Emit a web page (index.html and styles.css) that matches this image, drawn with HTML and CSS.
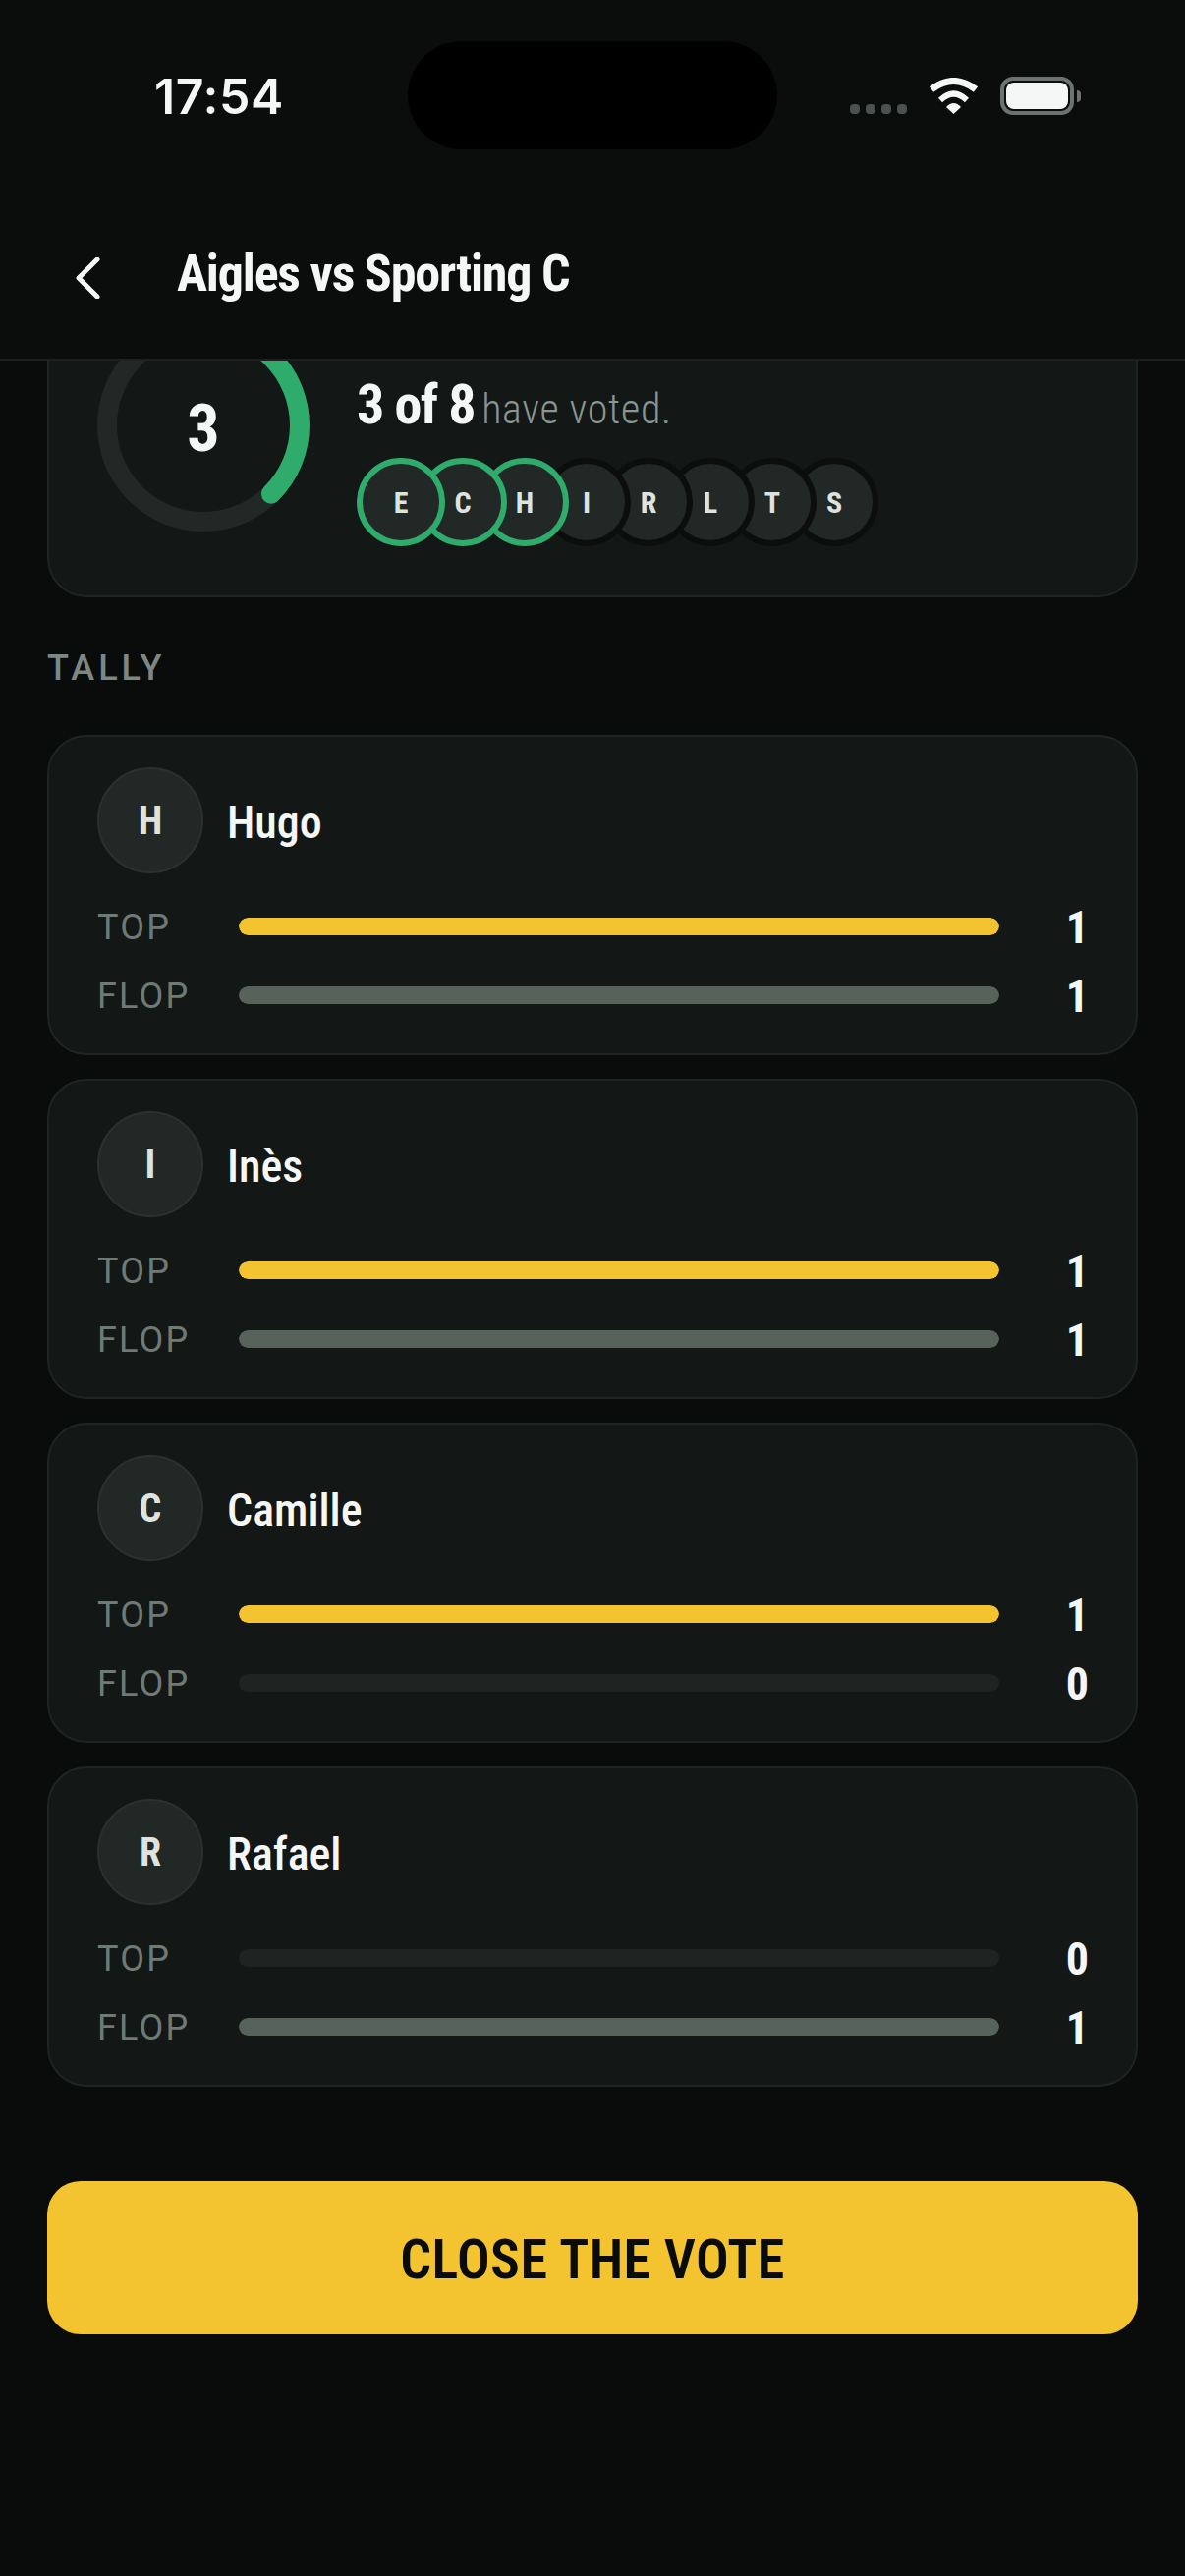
FILE: index.html
```html
<!DOCTYPE html>
<html lang="en">
<head>
    <meta charset="UTF-8">
    <meta name="viewport" content="width=device-width, initial-scale=1.0">
    <title>Aigles vs Sporting C</title>
    <link rel="stylesheet" href="styles.css">
</head>
<body>
    <div class="screen">
        <!-- Status bar and title -->
        <header class="header">
            <div class="status-bar">
                <span class="time">17:54</span>
                <div class="island"></div>
                <div class="status-icons">
                    <div class="signal"><i></i><i></i><i></i><i></i></div>
                    <svg class="wifi" width="51" height="37" viewBox="0 0 51 37">
                        <path d="M3 12Q25.500 -5 48 12" fill="none" stroke="#f5f7f6" stroke-width="7"/>
                        <path d="M12 23Q25.500 10 39 23" fill="none" stroke="#f5f7f6" stroke-width="6"/>
                        <path d="M18 30Q25.500 22 33 30L25.500 37Z" fill="#f5f7f6"/>
                    </svg>
                    <div class="battery"><div class="battery-level"></div></div>
                    <div class="battery-nub"></div>
                </div>
            </div>
            <div class="nav">
                <svg class="back" width="26" height="42" viewBox="0 0 26 42">
                    <path d="M23 2L4 21L23 40" fill="none" stroke="#f5f7f6" stroke-width="5" stroke-linecap="round" stroke-linejoin="round"/>
                </svg>
                <h1>Aigles vs Sporting C</h1>
            </div>
        </header>

        <main class="content">
            <div class="scroller">
                <!-- Vote progress -->
                <section class="card summary">
                    <div class="ring">
                        <svg width="216" height="216" viewBox="0 0 216 216">
                            <circle cx="108" cy="108" r="98" fill="none" stroke="#222825" stroke-width="20"/>
                            <circle class="ring-value" cx="108" cy="108" r="98" fill="none" stroke="#2fab6b" stroke-width="20" stroke-linecap="round" stroke-dasharray="231 616"/>
                        </svg>
                        <span class="ring-count">3</span>
                    </div>
                    <div class="summary-info">
                        <p class="voted"><strong>3 of 8</strong> <span class="voted-rest">have voted.</span></p>
                        <div class="voters">
                            <span class="voter done">E</span>
                            <span class="voter done">C</span>
                            <span class="voter done">H</span>
                            <span class="voter">I</span>
                            <span class="voter">R</span>
                            <span class="voter">L</span>
                            <span class="voter">T</span>
                            <span class="voter">S</span>
                        </div>
                    </div>
                </section>

                <h2 class="section-title">TALLY</h2>

                <div class="tally">
                    <section class="card player">
                        <div class="player-head"><span class="avatar">H</span><span class="name">Hugo</span></div>
                        <div class="row"><span class="row-label">TOP</span><div class="track"><div class="fill top" style="width:100%"></div></div><span class="count">1</span></div>
                        <div class="row"><span class="row-label">FLOP</span><div class="track"><div class="fill flop" style="width:100%"></div></div><span class="count">1</span></div>
                    </section>
                    <section class="card player">
                        <div class="player-head"><span class="avatar">I</span><span class="name">Inès</span></div>
                        <div class="row"><span class="row-label">TOP</span><div class="track"><div class="fill top" style="width:100%"></div></div><span class="count">1</span></div>
                        <div class="row"><span class="row-label">FLOP</span><div class="track"><div class="fill flop" style="width:100%"></div></div><span class="count">1</span></div>
                    </section>
                    <section class="card player">
                        <div class="player-head"><span class="avatar">C</span><span class="name">Camille</span></div>
                        <div class="row"><span class="row-label">TOP</span><div class="track"><div class="fill top" style="width:100%"></div></div><span class="count">1</span></div>
                        <div class="row"><span class="row-label">FLOP</span><div class="track"><div class="fill flop" style="width:0%"></div></div><span class="count">0</span></div>
                    </section>
                    <section class="card player">
                        <div class="player-head"><span class="avatar">R</span><span class="name">Rafael</span></div>
                        <div class="row"><span class="row-label">TOP</span><div class="track"><div class="fill top" style="width:0%"></div></div><span class="count">0</span></div>
                        <div class="row"><span class="row-label">FLOP</span><div class="track"><div class="fill flop" style="width:100%"></div></div><span class="count">1</span></div>
                    </section>
                </div>

                <button class="close-vote">CLOSE THE VOTE</button>
            </div>
        </main>
    </div>
</body>
</html>
```

FILE: styles.css
```css
/* General Styles */
* {
    box-sizing: border-box;
}

body {
    margin: 0;
    background: #0a0c0b;
    color: #f5f7f6;
    font-family: Roboto, sans-serif;
    font-stretch: 75%;
}

.screen {
    display: flex;
    flex-direction: column;
    height: 2622px;
    overflow: hidden;
}

/* Header */
.header {
    flex: none;
    position: relative;
    z-index: 2;
    height: 367px;
    background: #0a0d0c;
    border-bottom: 2px solid #1c2120;
}

.status-bar {
    display: flex;
    align-items: flex-start;
    height: 222px;
    padding: 42px 0 0 157px;
}

.time {
    width: 258px;
    margin-top: 29px;
    font-family: Inter, sans-serif;
    font-stretch: normal;
    font-size: 50px;
    font-weight: 600;
    line-height: 54px;
    letter-spacing: 0.6px;
}

.island {
    width: 376px;
    height: 110px;
    background: #000;
    border-radius: 55px;
}

.status-icons {
    display: flex;
    align-items: center;
    height: 39px;
    margin: 36px 0 0 74px;
}

.signal {
    display: flex;
    gap: 6px;
    align-self: flex-end;
    margin: 0 22px 1px 0;
}

.signal i {
    width: 10px;
    height: 10px;
    background: #4a524c;
    border-radius: 4px;
}

.wifi {
    margin-right: 22px;
}

.battery {
    width: 75px;
    height: 39px;
    padding: 2px;
    border: 4px solid #6a736f;
    border-radius: 13px;
}

.battery-level {
    height: 100%;
    background: #f5f7f6;
    border-radius: 8px;
}

.battery-nub {
    width: 4px;
    height: 12px;
    margin-left: 3px;
    background: #6a736f;
    border-radius: 0 4px 4px 0;
}

.nav {
    display: flex;
    align-items: center;
    padding-left: 76px;
}

.back {
    margin: 30px 78px 0 0;
}

.nav h1 {
    margin: 22px 0 0;
    font-size: 52px;
    font-weight: 700;
    line-height: 70px;
    letter-spacing: -1.2px;
}

/* Scrolled content */
.content {
    flex: 1;
    overflow: hidden;
}

.scroller {
    margin-top: -94px;
    padding: 0 48px;
}

.card {
    background: #131716;
    border: 2px solid #1f2523;
    border-radius: 40px;
}

/* Vote progress */
.summary {
    display: flex;
    align-items: flex-end;
    gap: 48px;
    padding: 50px 50px 50px 49px;
}

.ring {
    display: grid;
    place-items: center;
    width: 216px;
    height: 216px;
    margin-bottom: 15px;
}

.ring svg,
.ring-count {
    grid-area: 1 / 1;
}

.ring-value {
    transform: rotate(-90deg);
    transform-origin: center;
}

.ring-count {
    margin-top: 6px;
    font-size: 66px;
    font-weight: 700;
}

.voted {
    margin: 0 0 15px;
    font-size: 30px;
    line-height: 60px;
}

.voted strong {
    font-size: 56px;
    font-weight: 700;
    letter-spacing: -1.4px;
    color: #f5f7f6;
}

.voted-rest {
    color: #8a9590;
    font-size: 42px;
    font-weight: 300;
    font-stretch: 85%;
    letter-spacing: 0.7px;
}

.voters {
    display: flex;
}

.voter {
    display: flex;
    position: relative;
    align-items: center;
    justify-content: center;
    width: 90px;
    height: 90px;
    margin-right: -27px;
    background: #222825;
    border: 6px solid #0c0e0d;
    border-radius: 50%;
    color: #dfe3e0;
    font-size: 30px;
    font-weight: 700;
}

.voter.done {
    border-color: #2fab6b;
}

/* earlier voters sit on top of later ones */
.voter:nth-child(1) { z-index: 8; }
.voter:nth-child(2) { z-index: 7; }
.voter:nth-child(3) { z-index: 6; }
.voter:nth-child(4) { z-index: 5; }
.voter:nth-child(5) { z-index: 4; }
.voter:nth-child(6) { z-index: 3; }
.voter:nth-child(7) { z-index: 2; }
.voter:nth-child(8) { z-index: 1; }

.section-title {
    margin: 50px 0 46px;
    color: #7d8783;
    font-size: 36px;
    font-weight: 500;
    font-stretch: 88%;
    line-height: 44px;
    letter-spacing: 4px;
}

/* Tally cards */
.tally {
    display: flex;
    flex-direction: column;
    gap: 24px;
}

.player {
    height: 326px;
    padding: 31px 48px 0 49px;
}

.player-head {
    display: flex;
    align-items: center;
    gap: 24px;
    margin-bottom: 26px;
}

.avatar {
    display: flex;
    align-items: center;
    justify-content: center;
    width: 108px;
    height: 108px;
    background: #222825;
    border: 2px solid #2b312e;
    border-radius: 50%;
    color: #dfe3e0;
    font-size: 40px;
    font-weight: 700;
}

.name {
    padding-top: 4px;
    font-size: 46px;
    font-weight: 500;
    font-stretch: 80%;
}

.row {
    display: grid;
    grid-template-columns: 144px 774px 1fr;
    align-items: center;
    height: 52px;
    margin-bottom: 18px;
}

.row-label {
    padding-top: 2px;
    color: #6f7a75;
    font-size: 36px;
    font-weight: 400;
    font-stretch: 90%;
    letter-spacing: 2.2px;
}

.track {
    height: 18px;
    background: #1e2422;
    border-radius: 9px;
    overflow: hidden;
}

.fill {
    height: 100%;
    border-radius: 9px;
}

.fill.top {
    background: #f4c430;
}

.fill.flop {
    background: #57625b;
}

.count {
    padding-top: 2px;
    font-size: 46px;
    font-weight: 700;
    text-align: right;
}

/* Close button */
.close-vote {
    display: block;
    width: 100%;
    height: 156px;
    margin-top: 96px;
    padding-top: 4px;
    background: #f4c430;
    border: none;
    border-radius: 34px;
    color: #0a0c0b;
    font-family: inherit;
    font-stretch: inherit;
    font-size: 56px;
    font-weight: 600;
    letter-spacing: 0.4px;
}
```
